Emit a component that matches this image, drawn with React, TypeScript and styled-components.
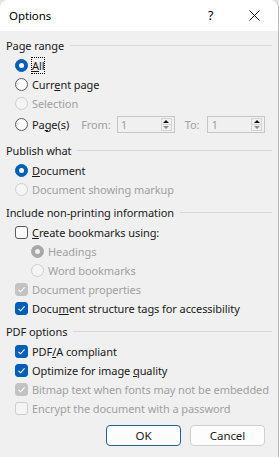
import React from 'react';
import styled, { createGlobalStyle } from 'styled-components';

const GlobalStyle = createGlobalStyle`
  html, body {
    margin: 0;
    padding: 0;
    background: #e4e4e4;
  }
  body {
    font-family: 'Noto Sans', 'Open Sans', sans-serif;
    font-size: 11px;
    letter-spacing: -0.08px;
    color: #1a1a1a;
  }
`;

const Window = styled.div`
  box-sizing: border-box;
  width: 279px;
  height: 457px;
  background: #f0f0f0;
  border-right: 1px solid #b9b9b9;
  border-radius: 8px 8px 0 0;
  overflow: hidden;
  display: flex;
  flex-direction: column;
`;

const TitleBar = styled.div`
  height: 31px;
  background: #ffffff;
  display: flex;
  align-items: center;
  padding-left: 9px;
  flex-shrink: 0;
`;

const Title = styled.div`
  flex: 1;
  font-size: 11.5px;
  color: #000;
`;

const HelpGlyph = styled.div`
  width: 14px;
  margin-right: 27px;
  font-size: 12.5px;
  color: #000;
`;

const CloseButton = styled.div`
  width: 29px;
  display: flex;
  align-items: center;
  justify-content: flex-start;
`;

const Body = styled.div`
  padding: 4px 6px 0 6px;
  display: flex;
  flex-direction: column;
`;

const GroupHeader = styled.div<{ $gap?: number }>`
  display: flex;
  align-items: center;
  height: 20px;
  margin-top: ${p => p.$gap ?? 0}px;
  margin-bottom: 1px;
  white-space: nowrap;
`;

const Rule = styled.div`
  flex: 1;
  height: 1px;
  background: #d9d9d9;
  margin-left: 6px;
`;

const Row = styled.div<{ $indent?: boolean; $h?: number }>`
  display: flex;
  align-items: center;
  height: ${p => p.$h ?? 19}px;
  padding-left: ${p => (p.$indent ? 25 : 9)}px;
  white-space: nowrap;
`;

const Label = styled.span<{ $disabled?: boolean; $focus?: boolean }>`
  margin-left: 4px;
  color: ${p => (p.$disabled ? '#a0a0a0' : '#1a1a1a')};
  line-height: 15px;
  outline: ${p => (p.$focus ? '1px dotted #000' : 'none')};
  outline-offset: 0;
`;

const RadioCircle = styled.span<{ $checked?: boolean; $disabled?: boolean }>`
  box-sizing: border-box;
  width: 13px;
  height: 13px;
  border-radius: 50%;
  flex-shrink: 0;
  display: flex;
  align-items: center;
  justify-content: center;
  border: 1px solid
    ${p => (p.$checked ? (p.$disabled ? '#a8a8a8' : '#005fb8') : p.$disabled ? '#cfcfcf' : '#5a5a5a')};
  background: ${p => (p.$checked ? (p.$disabled ? '#a8a8a8' : '#005fb8') : p.$disabled ? '#f5f5f5' : '#fbfbfb')};

  &::after {
    content: '';
    display: ${p => (p.$checked ? 'block' : 'none')};
    width: 5px;
    height: 5px;
    border-radius: 50%;
    background: ${p => (p.$disabled ? '#f0f0f0' : '#ffffff')};
  }
`;

const CheckBox = styled.span<{ $checked?: boolean; $disabled?: boolean }>`
  box-sizing: border-box;
  width: 13px;
  height: 13px;
  border-radius: 3px;
  flex-shrink: 0;
  display: flex;
  align-items: center;
  justify-content: center;
  border: 1px solid
    ${p => (p.$checked ? (p.$disabled ? '#c3c3c3' : '#005fb8') : p.$disabled ? '#cfcfcf' : '#5a5a5a')};
  background: ${p => (p.$checked ? (p.$disabled ? '#c3c3c3' : '#005fb8') : p.$disabled ? '#f5f5f5' : '#fbfbfb')};
`;

const Caption = styled.span<{ $left: number }>`
  margin-left: ${p => p.$left}px;
  color: #a0a0a0;
`;

const SpinBox = styled.div<{ $left: number }>`
  box-sizing: border-box;
  margin-left: ${p => p.$left}px;
  width: 58px;
  height: 17px;
  border: 1px solid #c6c6c6;
  background: #f0f0f0;
  display: flex;
  align-items: stretch;
`;

const SpinValue = styled.span`
  flex: 1;
  padding-left: 3px;
  color: #a0a0a0;
  line-height: 16px;
  font-size: 11.5px;
`;

const SpinButtons = styled.div`
  width: 11px;
  margin: 1px 2px 1px 0;
  display: flex;
  flex-direction: column;
  border: 1px solid #d4d4d4;
  box-sizing: border-box;
`;

const SpinArrow = styled.div<{ $down?: boolean }>`
  flex: 1;
  display: flex;
  align-items: center;
  justify-content: center;
  border-top: ${p => (p.$down ? '1px solid #d4d4d4' : 'none')};

  &::after {
    content: '';
    width: 0;
    height: 0;
    border-left: 3px solid transparent;
    border-right: 3px solid transparent;
    ${p =>
      p.$down
        ? 'border-top: 3px solid #8a8a8a;'
        : 'border-bottom: 3px solid #111;'}
  }
`;

const ButtonBar = styled.div`
  display: flex;
  justify-content: flex-end;
  gap: 9px;
  padding-right: 7px;
  margin-top: 7px;
`;

const Button = styled.div<{ $primary?: boolean }>`
  box-sizing: border-box;
  width: 75px;
  height: 21px;
  border-radius: 4px;
  background: #fdfdfd;
  border: 1px solid ${p => (p.$primary ? '#1f5fa0' : '#d0d0d0')};
  display: flex;
  align-items: center;
  justify-content: center;
  color: #1a1a1a;
  font-size: 11.5px;
`;

const Check = ({ color }: { color: string }) => (
  <svg width="9" height="9" viewBox="0 0 9 9">
    <path d="M1.5 4.8 L3.6 6.8 L7.6 2.4" fill="none" stroke={color} strokeWidth="1.1" />
  </svg>
);

type Opt = { checked?: boolean; disabled?: boolean };

const Radio: React.FC<Opt> = ({ checked, disabled }) => (
  <RadioCircle $checked={checked} $disabled={disabled} />
);

const Box: React.FC<Opt> = ({ checked, disabled }) => (
  <CheckBox $checked={checked} $disabled={disabled}>
    {checked && <Check color="#ffffff" />}
  </CheckBox>
);

const Spin: React.FC<{ left: number }> = ({ left }) => (
  <SpinBox $left={left}>
    <SpinValue>1</SpinValue>
    <SpinButtons>
      <SpinArrow />
      <SpinArrow $down />
    </SpinButtons>
  </SpinBox>
);

const App: React.FC = () => (
  <>
    <GlobalStyle />
    <Window>
      <TitleBar>
        <Title>Options</Title>
        <HelpGlyph>?</HelpGlyph>
        <CloseButton>
          <svg width="11" height="11" viewBox="0 0 11 11">
            <path d="M0.5 0.5 L10.5 10.5 M10.5 0.5 L0.5 10.5" stroke="#111" strokeWidth="1" />
          </svg>
        </CloseButton>
      </TitleBar>

      <Body>
        <GroupHeader>
          Page range
          <Rule />
        </GroupHeader>
        <Row>
          <Radio checked />
          <Label $focus><u>A</u>ll</Label>
        </Row>
        <Row>
          <Radio />
          <Label>Curr<u>e</u>nt page</Label>
        </Row>
        <Row>
          <Radio disabled />
          <Label $disabled>Selection</Label>
        </Row>
        <Row $h={22}>
          <Radio />
          <Label>Pa<u>g</u>e(s)</Label>
          <Caption $left={12}>From:</Caption>
          <Spin left={6} />
          <Caption $left={10}>To:</Caption>
          <Spin left={8} />
        </Row>

        <GroupHeader $gap={5}>
          Publish what
          <Rule />
        </GroupHeader>
        <Row>
          <Radio checked />
          <Label><u>D</u>ocument</Label>
        </Row>
        <Row>
          <Radio disabled />
          <Label $disabled>Document showing markup</Label>
        </Row>

        <GroupHeader $gap={3}>
          Include non-printing information
          <Rule />
        </GroupHeader>
        <Row>
          <Box />
          <Label><u>C</u>reate bookmarks using:</Label>
        </Row>
        <Row $indent>
          <Radio checked disabled />
          <Label $disabled>Headings</Label>
        </Row>
        <Row $indent>
          <Radio disabled />
          <Label $disabled>Word bookmarks</Label>
        </Row>
        <Row>
          <Box checked disabled />
          <Label $disabled>Document properties</Label>
        </Row>
        <Row>
          <Box checked />
          <Label>Docu<u>m</u>ent structure tags for accessibility</Label>
        </Row>

        <GroupHeader $gap={3}>
          PDF options
          <Rule />
        </GroupHeader>
        <Row>
          <Box checked />
          <Label>PDF<u>/</u>A compliant</Label>
        </Row>
        <Row>
          <Box checked />
          <Label>Optimize for image <u>q</u>uality</Label>
        </Row>
        <Row>
          <Box checked disabled />
          <Label $disabled>Bitmap text when fonts may not be embedded</Label>
        </Row>
        <Row>
          <Box disabled />
          <Label $disabled>Encrypt the document with a password</Label>
        </Row>

        <ButtonBar>
          <Button $primary>OK</Button>
          <Button>Cancel</Button>
        </ButtonBar>
      </Body>
    </Window>
  </>
);

export default App;
